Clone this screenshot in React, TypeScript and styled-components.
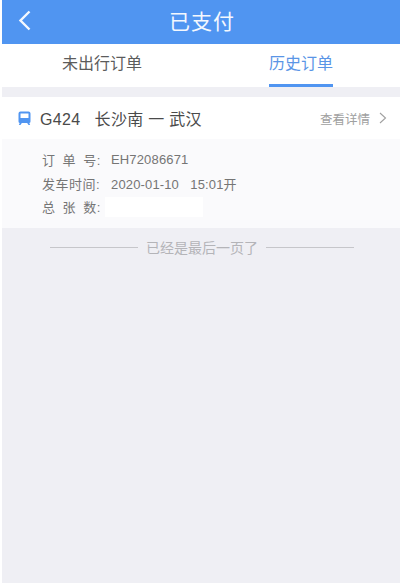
import { createGlobalStyle } from "styled-components";
import styled from "styled-components";

const GlobalStyle = createGlobalStyle`
  html, body {
    margin: 0;
    padding: 0;
    background: #fff;
  }
  * {
    box-sizing: border-box;
  }
`;

const Page = styled.div`
  width: 400px;
  height: 583px;
  padding-left: 2px;
  overflow: hidden;
  display: flex;
  flex-direction: column;
  background: #fff;
  font-family: "Liberation Sans", "Noto Sans CJK SC", sans-serif;
`;

const Header = styled.header`
  height: 44px;
  flex-shrink: 0;
  position: relative;
  display: flex;
  align-items: center;
  justify-content: center;
  padding: 0 0 5px 2px;
  background: #5095f1;
  color: #f4f8fe;
  font-size: 21px;
  letter-spacing: 1px;
`;

const BackIcon = styled.svg`
  position: absolute;
  left: 15px;
  top: 10px;
  width: 16px;
  height: 21px;
`;

const Tabs = styled.nav`
  height: 43px;
  flex-shrink: 0;
  display: flex;
  background: #fff;
`;

const Tab = styled.div<{ $active?: boolean; $left: number }>`
  margin-left: ${(p) => p.$left}px;
  height: 43px;
  padding-top: 9px;
  font-size: 16px;
  line-height: 22px;
  color: ${(p) => (p.$active ? "#5a95e6" : "#5c5c5c")};
  border-bottom: 3px solid ${(p) => (p.$active ? "#5095f1" : "transparent")};
`;

const Content = styled.main`
  flex: 1;
  padding-top: 10px;
  background: #efeff4;
`;

const Card = styled.section`
  background: #fff;
`;

const CardHead = styled.div`
  height: 42px;
  display: flex;
  align-items: center;
  padding: 0 13px 0 16px;
  color: #4a4a4a;
`;

const TrainIcon = styled.svg`
  width: 13px;
  height: 14px;
  flex-shrink: 0;
`;

const Route = styled.span`
  margin-left: 9px;
  font-size: 16px;
  letter-spacing: 0.3px;
  white-space: pre;
`;

const Detail = styled.span`
  margin-left: auto;
  display: flex;
  align-items: center;
  gap: 9px;
  font-size: 12.5px;
  color: #a0a0a0;
`;

const CardBody = styled.div`
  height: 89px;
  padding: 9px 0 0 40px;
  background: #fafafc;
`;

const Row = styled.div`
  height: 23.5px;
  display: flex;
  align-items: center;
  color: #757575;
`;

const Label = styled.span`
  width: 69px;
  flex-shrink: 0;
  font-size: 13px;
  letter-spacing: 0.5px;
  word-spacing: 3px;
  white-space: pre;
`;

const Value = styled.span`
  font-size: 13px;
  letter-spacing: 0.15px;
  white-space: pre;
`;

const Redacted = styled.span`
  width: 98px;
  height: 20px;
  margin-left: -6px;
  background: #fff;
`;

const EndNote = styled.div`
  display: flex;
  align-items: center;
  justify-content: center;
  gap: 8px;
  height: 38px;
  padding-left: 2px;
  font-size: 14px;
  color: #b4b4b8;
`;

const Line = styled.span`
  width: 88px;
  height: 1px;
  background: #c6c6ca;
`;

export default function App() {
  return (
    <Page>
      <GlobalStyle />
      <Header>
        <BackIcon viewBox="0 0 16 21" fill="none">
          <path d="M12.5 1.5 L3.5 10.5 L12.5 19.5" stroke="#f4f8fe" strokeWidth="2.4" />
        </BackIcon>
        已支付
      </Header>
      <Tabs>
        <Tab $left={60}>未出行订单</Tab>
        <Tab $left={127} $active>
          历史订单
        </Tab>
      </Tabs>
      <Content>
        <Card>
          <CardHead>
            <TrainIcon viewBox="0 0 13 14">
              <path
                d="M2.5 0.5 h8 a2 2 0 0 1 2 2 v8 a1.5 1.5 0 0 1 -1.5 1.5 h-9 a1.5 1.5 0 0 1 -1.5 -1.5 v-8 a2 2 0 0 1 2 -2 z M2.5 2.5 v4.5 h8 v-4.5 z"
                fill="#5095f1"
                fillRule="evenodd"
              />
              <path d="M3.5 11 L1.5 14 M9.5 11 L11.5 14" stroke="#5095f1" strokeWidth="1.6" />
            </TrainIcon>
            <Route>G424   长沙南 一 武汉</Route>
            <Detail>
              查看详情
              <svg width="8" height="12" viewBox="0 0 8 12" fill="none">
                <path d="M1 1 L6.5 6 L1 11" stroke="#a0a0a0" strokeWidth="1.1" />
              </svg>
            </Detail>
          </CardHead>
          <CardBody>
            <Row>
              <Label>订 单 号:</Label>
              <Value>EH72086671</Value>
            </Row>
            <Row>
              <Label>发车时间:</Label>
              <Value>2020-01-10   15:01开</Value>
            </Row>
            <Row>
              <Label>总 张 数:</Label>
              <Redacted />
            </Row>
          </CardBody>
        </Card>
        <EndNote>
          <Line />
          已经是最后一页了
          <Line />
        </EndNote>
      </Content>
    </Page>
  );
}
